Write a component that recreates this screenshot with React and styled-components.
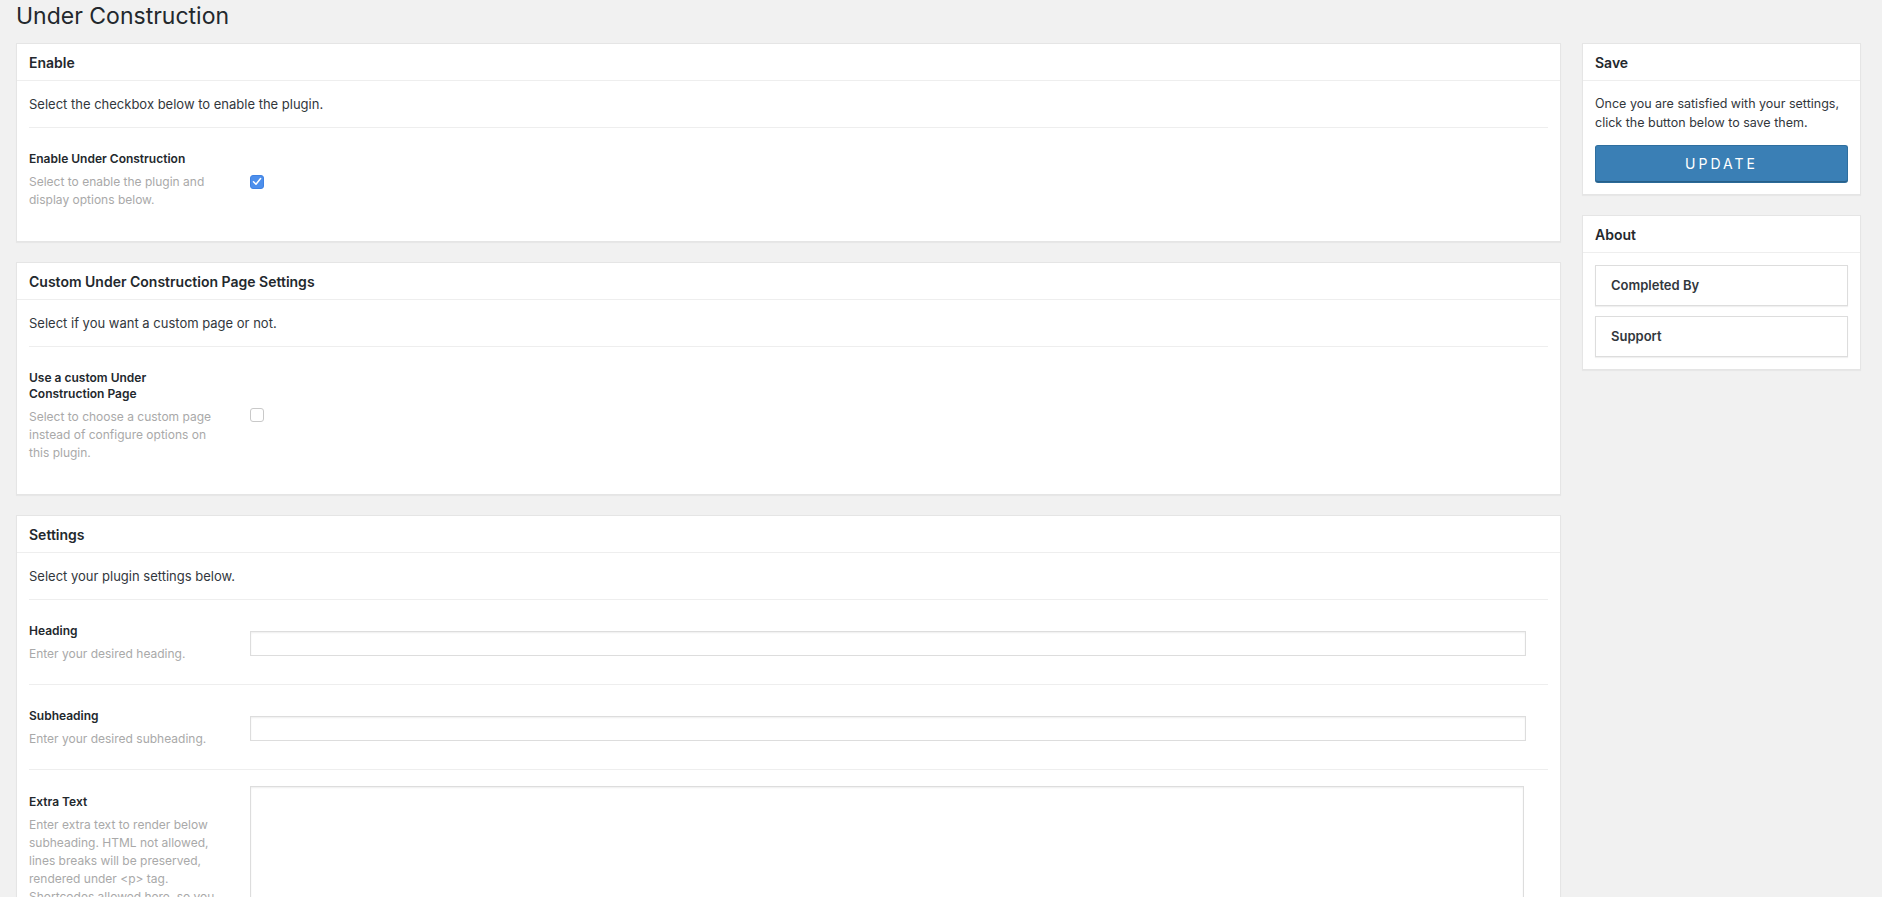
import React from "react";
import styled, { createGlobalStyle } from "styled-components";

const GlobalStyle = createGlobalStyle`
  html, body {
    margin: 0;
    padding: 0;
    background: #f1f1f1;
    font-family: Inter, "Noto Sans", "Liberation Sans", sans-serif;
    color: #32373c;
    -webkit-font-smoothing: antialiased;
  }
  * { box-sizing: border-box; }
`;

const Page = styled.div`
  padding: 0 21px 0 16px;
`;

const Title = styled.h1`
  margin: 0 0 12px;
  padding-top: 1px;
  font-size: 23px;
  line-height: 30px;
  font-weight: 400;
  color: #23282d;
`;

const Columns = styled.div`
  display: flex;
  align-items: flex-start;
  gap: 21px;
`;

const Main = styled.div`
  flex: 1;
  min-width: 0;
  display: flex;
  flex-direction: column;
  gap: 20px;
`;

const Sidebar = styled.aside`
  width: 279px;
  flex-shrink: 0;
  display: flex;
  flex-direction: column;
  gap: 20px;
`;

const Card = styled.section`
  background: #fff;
  border: 1px solid #e5e5e5;
  box-shadow: 0 1px 1px rgba(0, 0, 0, 0.04);
`;

const CardHeader = styled.h2`
  margin: 0;
  padding: 9px 12px 8px;
  font-size: 14px;
  line-height: 19px;
  font-weight: 600;
  color: #23282d;
  border-bottom: 1px solid #eee;
`;

const CardBody = styled.div`
  padding: ${(p) => (p.$side ? "12px" : "0 12px 11px")};
`;

const Intro = styled.p`
  margin: 0;
  padding: 14px 0 13px;
  font-size: 13px;
  line-height: 19px;
  color: #32373c;
  border-bottom: 1px solid #eee;
`;

const Row = styled.div`
  display: grid;
  grid-template-columns: 221px 1fr;
  align-items: ${(p) => (p.$top ? "start" : "center")};
  padding: ${(p) => (p.$top ? "16px 0 21px" : "23px 0 21px")};
  border-bottom: ${(p) => (p.$last ? "none" : "1px solid #eee")};
`;

const LabelCol = styled.div`
  padding-right: 30px;
  padding-top: ${(p) => (p.$top ? "8px" : "0")};
`;

const Label = styled.div`
  font-size: 12px;
  line-height: 16px;
  font-weight: 600;
  color: #23282d;
`;

const Help = styled.div`
  margin-top: 6px;
  font-size: 12px;
  line-height: 18px;
  color: #a9a9a9;
`;

const Check = styled.span`
  display: inline-flex;
  align-items: center;
  justify-content: center;
  width: 14px;
  height: 14px;
  border-radius: 3px;
  background: ${(p) => (p.$on ? "#4d8fec" : "#fff")};
  border: 1px solid ${(p) => (p.$on ? "#3f82e3" : "#c9c9c9")};
  svg { display: block; }
`;

const TextInput = styled.input`
  display: block;
  height: 25px;
  margin-right: 22px;
  border: 1px solid #ddd;
  box-shadow: inset 0 1px 2px rgba(0, 0, 0, 0.07);
  background: #fff;
  font: inherit;
  padding: 0 6px;
  outline: none;
`;

const TextArea = styled.textarea`
  display: block;
  height: 260px;
  margin-right: 24px;
  border: 1px solid #ddd;
  box-shadow: inset 0 1px 2px rgba(0, 0, 0, 0.07);
  background: #fff;
  resize: none;
  font: inherit;
  outline: none;
`;

const SideText = styled.p`
  margin: 1px 0 13px;
  font-size: 12.5px;
  line-height: 19px;
  color: #32373c;
`;

const UpdateButton = styled.button`
  display: block;
  width: 100%;
  height: 37px;
  border: 1px solid #2f6f9f;
  border-bottom-color: #285f88;
  border-radius: 3px;
  background: #3a7fb5;
  color: #fff;
  font-family: inherit;
  font-size: 14px;
  letter-spacing: 3px;
  text-transform: uppercase;
  box-shadow: 0 1px 0 #2b6a98;
  cursor: pointer;
`;

const LinkBox = styled.div`
  height: 41px;
  padding: 0 15px;
  border: 1px solid #ddd;
  box-shadow: 0 1px 1px rgba(0, 0, 0, 0.06);
  font-size: 13px;
  line-height: 39px;
  font-weight: 600;
  color: #32373c;
  & + & { margin-top: 10px; }
`;

const CheckIcon = () => (
  <svg width="10" height="9" viewBox="0 0 10 9">
    <path d="M1.5 4.8 L4 7.2 L8.6 1.6" fill="none" stroke="#fff" strokeWidth="1.5" strokeLinecap="round" strokeLinejoin="round" />
  </svg>
);

const Checkbox = ({ on }) => <div><Check $on={on}>{on && <CheckIcon />}</Check></div>;

export default function App() {
  return (
    <Page>
      <GlobalStyle />
      <Title>Under Construction</Title>
      <Columns>
        <Main>
          <Card>
            <CardHeader>Enable</CardHeader>
            <CardBody>
              <Intro>Select the checkbox below to enable the plugin.</Intro>
              <Row $last>
                <LabelCol>
                  <Label>Enable Under Construction</Label>
                  <Help>Select to enable the plugin and display options below.</Help>
                </LabelCol>
                <Checkbox on />
              </Row>
            </CardBody>
          </Card>

          <Card>
            <CardHeader>Custom Under Construction Page Settings</CardHeader>
            <CardBody>
              <Intro>Select if you want a custom page or not.</Intro>
              <Row $last>
                <LabelCol>
                  <Label>Use a custom Under Construction Page</Label>
                  <Help>Select to choose a custom page instead of configure options on this plugin.</Help>
                </LabelCol>
                <Checkbox on={false} />
              </Row>
            </CardBody>
          </Card>

          <Card>
            <CardHeader>Settings</CardHeader>
            <CardBody>
              <Intro>Select your plugin settings below.</Intro>
              <Row>
                <LabelCol>
                  <Label>Heading</Label>
                  <Help>Enter your desired heading.</Help>
                </LabelCol>
                <TextInput type="text" />
              </Row>
              <Row>
                <LabelCol>
                  <Label>Subheading</Label>
                  <Help>Enter your desired subheading.</Help>
                </LabelCol>
                <TextInput type="text" />
              </Row>
              <Row $top $last>
                <LabelCol $top>
                  <Label>Extra Text</Label>
                  <Help>
                    Enter extra text to render below subheading. HTML not allowed, lines breaks will be preserved, rendered under &lt;p&gt; tag. Shortcodes allowed here, so you can add forms or other content.
                  </Help>
                </LabelCol>
                <TextArea />
              </Row>
            </CardBody>
          </Card>
        </Main>

        <Sidebar>
          <Card>
            <CardHeader>Save</CardHeader>
            <CardBody $side>
              <SideText>Once you are satisfied with your settings, click the button below to save them.</SideText>
              <UpdateButton>Update</UpdateButton>
            </CardBody>
          </Card>
          <Card>
            <CardHeader>About</CardHeader>
            <CardBody $side>
              <LinkBox>Completed By</LinkBox>
              <LinkBox>Support</LinkBox>
            </CardBody>
          </Card>
        </Sidebar>
      </Columns>
    </Page>
  );
}
